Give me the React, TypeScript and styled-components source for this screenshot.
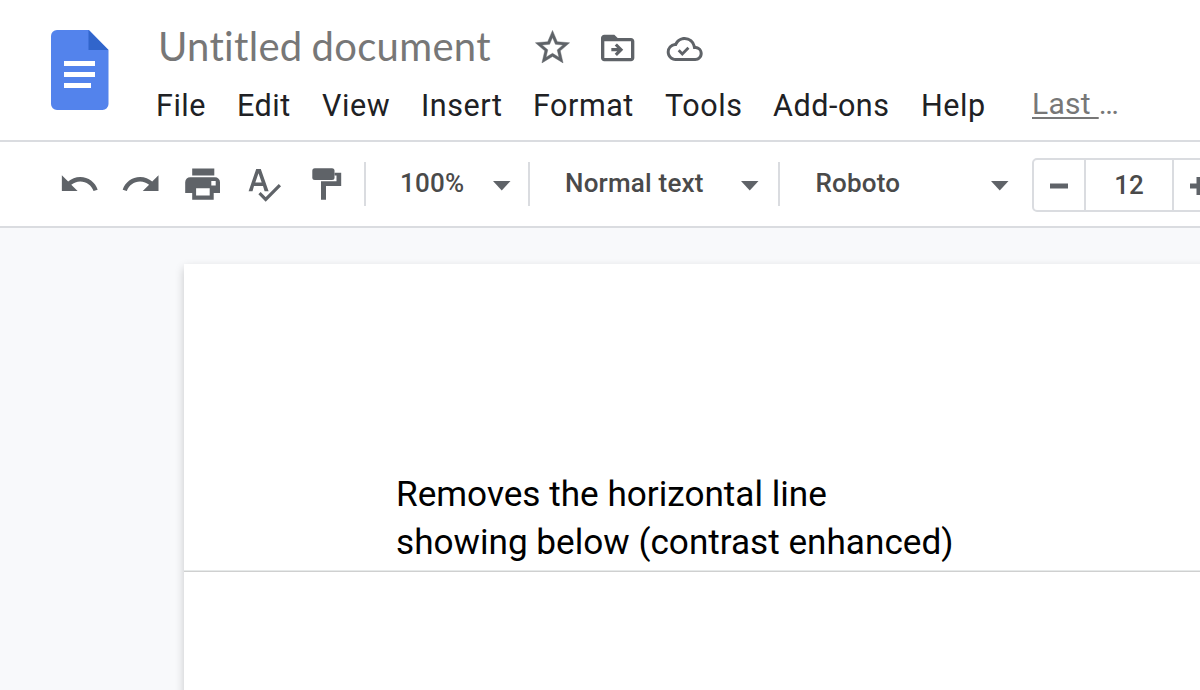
import React from "react";
import styled, { createGlobalStyle } from "styled-components";

const GlobalStyle = createGlobalStyle`
  * { box-sizing: border-box; }
  html, body { margin: 0; padding: 0; }
  body { width: 1200px; height: 690px; overflow: hidden; background: #f8f9fb; font-family: Roboto, sans-serif; }
`;

const Shell = styled.div`
  width: 1200px;
  height: 690px;
  overflow: hidden;
  display: flex;
  flex-direction: column;
`;

const Header = styled.header`
  height: 142px;
  flex: none;
  display: flex;
  background: #fff;
  border-bottom: 2px solid #dadce0;
`;

const Logo = styled.svg`
  width: 58px;
  height: 80px;
  margin: 30px 47px 0 51px;
  flex: none;
`;

const HeaderMain = styled.div`
  display: flex;
  flex-direction: column;
  padding-top: 22px;
`;

const TitleRow = styled.div`
  display: flex;
  height: 52px;
`;

const Title = styled.h1`
  margin: -1px 0 0 2px;
  width: 374px;
  font: 400 40px/50px Lato, sans-serif;
  letter-spacing: 0.3px;
  word-spacing: -1.5px;
  color: #777;
  white-space: nowrap;
`;

const TitleIcon = styled.svg<{ $size: number; $top: number; $gap: number }>`
  width: ${(p) => p.$size}px;
  height: ${(p) => p.$size}px;
  margin: ${(p) => p.$top}px ${(p) => p.$gap}px 0 0;
  fill: #5f6368;
  flex: none;
`;

const MenuBar = styled.nav`
  display: flex;
  height: 60px;
`;

const MenuItem = styled.span<{ $width: number }>`
  width: ${(p) => p.$width}px;
  flex: none;
  font-size: 30.5px;
  line-height: 63px;
  letter-spacing: 0.55px;
  color: #202124;
  white-space: nowrap;
`;

const LastEdit = styled.span`
  font-size: 30px;
  line-height: 60px;
  letter-spacing: 0.3px;
  color: #777;
  white-space: pre;
`;

const Underlined = styled.span`
  text-decoration: underline;
  text-decoration-thickness: 2px;
  text-underline-offset: 3px;
`;

const Toolbar = styled.div`
  height: 86px;
  flex: none;
  display: flex;
  align-items: flex-start;
  background: #fff;
  border-bottom: 2px solid #dadce0;
  padding-left: 58px;
`;

const Tools = styled.div`
  display: flex;
  flex: none;
  gap: 20px;
  width: 306px;
  padding-top: 21px;
`;

const ToolIcon = styled.svg`
  width: 42px;
  height: 42px;
  fill: #5f6368;
  flex: none;
`;

const Picker = styled.div<{ $width: number; $start: number; $end: number }>`
  width: ${(p) => p.$width}px;
  height: 44px;
  margin-top: 20px;
  padding: 0 ${(p) => p.$end}px 0 ${(p) => p.$start}px;
  flex: none;
  display: flex;
  justify-content: space-between;
  border-left: 2px solid #dadce0;
  font-weight: 500;
  font-size: 26px;
  line-height: 43px;
  letter-spacing: 0.2px;
  color: #4a4a4a;
  white-space: nowrap;
`;

const Caret = styled.svg`
  width: 18px;
  height: 10px;
  margin-top: 19px;
  fill: #5f6368;
`;

const Stepper = styled.div`
  display: flex;
  flex: none;
  width: 194px;
  height: 54px;
  margin-top: 16px;
  border: 2px solid #dadce0;
  border-radius: 5px;
`;

const StepperCell = styled.div<{ $width: number }>`
  width: ${(p) => p.$width}px;
  flex: none;
  display: flex;
  align-items: center;
  justify-content: center;
  font-weight: 500;
  font-size: 26px;
  color: #4a4a4a;
  & + & { border-left: 2px solid #dadce0; }
`;

const StepIcon = styled.svg`
  width: 18px;
  height: 18px;
  margin-top: 1px;
  fill: #5f6368;
`;

const Canvas = styled.main`
  flex: 1;
  min-height: 0;
  padding: 36px 0 0 184px;
  background: #f8f9fb;
`;

const Page = styled.article`
  width: 1100px;
  height: 500px;
  background: #fff;
  box-shadow: 0 4px 9px rgba(0, 0, 0, 0.2);
`;

const Body = styled.div`
  height: 308px;
  padding: 206px 0 0 212px;
  border-bottom: 1px solid #cfd0d0;
  box-shadow: inset 0 -1px 0 #e6e9e9;
`;

const Paragraph = styled.p`
  margin: 0;
  font-size: 35.15px;
  line-height: 48px;
  color: #000;
  white-space: nowrap;
`;

const menus: [string, number][] = [
  ["File", 81], ["Edit", 85], ["View", 99], ["Insert", 112], ["Format", 132],
  ["Tools", 108], ["Add-ons", 148], ["Help", 111],
];

const DropCaret = () => (
  <Caret viewBox="0 0 18 10"><path d="M0 0h17.500L8.750 9.500z" /></Caret>
);

export default function App() {
  return (
    <Shell>
      <GlobalStyle />
      <Header>
        <Logo viewBox="0 0 58 80">
          <path fill="#5383ec" d="M6 0H38L57.500 20V74a6 6 0 0 1-6 6H6a6 6 0 0 1-6-6V6a6 6 0 0 1 6-6z" />
          <path fill="#3165cb" d="M37.500 0v20h20z" />
          <path fill="#fff" d="M13 31h31v5H13zM13 42h31v5H13zM13 53h27v5H13z" />
        </Logo>
        <HeaderMain>
          <TitleRow>
            <Title>Untitled document</Title>
            <TitleIcon viewBox="0 0 24 24" $size={41} $top={5} $gap={25}>
              <path stroke="#5f6368" strokeWidth="0.25" d="M22 9.24l-7.19-.62L12 2 9.19 8.63 2 9.24l5.46 4.73L5.82 21 12 17.27 18.18 21l-1.63-7.03L22 9.24zM12 15.4l-3.76 2.27 1-4.28-3.32-2.88 4.38-.38L12 6.100l1.71 4.04 4.38.38-3.32 2.88 1 4.28L12 15.4z" />
            </TitleIcon>
            <TitleIcon viewBox="0.2 0 24 24" $size={40} $top={6.3} $gap={29}>
              <path d="M20 6h-8l-2-2H4c-1.100 0-2 .9-2 2v12c0 1.100.9 2 2 2h16c1.100 0 2-.9 2-2V8c0-1.100-.9-2-2-2zm0 12H4V8h16v10z" />
              <path fill="none" stroke="#5f6368" strokeWidth="1.9" d="M8.200 13H14M10.900 9.900L14 13l-3.100 3.100" />
            </TitleIcon>
            <TitleIcon viewBox="0.2 0 24 24" $size={36} $top={8.5} $gap={0} overflow="visible">
              <path d="M19.35 10.04A7.49 7.49 0 0 0 12 4C9.11 4 6.600 5.64 5.35 8.04A5.994 5.994 0 0 0 0 14c0 3.31 2.69 6 6 6h13c2.76 0 5-2.24 5-5 0-2.64-2.050-4.78-4.65-4.96zM19 18H6c-2.21 0-4-1.79-4-4 0-2.050 1.53-3.76 3.56-3.97l1.070-.11.5-.95A5.469 5.469 0 0 1 12 6c2.62 0 4.88 1.86 5.39 4.43l.3 1.500 1.53.11A2.98 2.98 0 0 1 22 15c0 1.65-1.35 3-3 3z" />
              <path fill="none" stroke="#5f6368" strokeWidth="1.9" d="M8 12.900l2.400 2.400 4.100-4.100" />
            </TitleIcon>
          </TitleRow>
          <MenuBar>
            {menus.map(([label, width]) => (
              <MenuItem key={label} $width={width}>{label}</MenuItem>
            ))}
            <LastEdit><Underlined>Last </Underlined>…</LastEdit>
          </MenuBar>
        </HeaderMain>
      </Header>
      <Toolbar>
        <Tools>
          <ToolIcon viewBox="-0.2 0 24 24"><path d="M12.500 8c-2.65 0-5.050.99-6.900 2.600L2 7v9h9l-3.62-3.62c1.39-1.16 3.16-1.88 5.12-1.88 3.54 0 6.55 2.31 7.600 5.500l2.37-.78C21.08 11.03 17.15 8 12.500 8z" /></ToolIcon>
          <ToolIcon viewBox="0 0 24 24"><path d="M18.4 10.6C16.55 8.99 14.15 8 11.5 8c-4.65 0-8.58 3.03-9.96 7.22L3.9 16c1.05-3.19 4.05-5.5 7.6-5.5 1.95 0 3.73.72 5.12 1.88L13 16h9V7l-3.6 3.6z" /></ToolIcon>
          <ToolIcon viewBox="0 0 42 42">
            <path fillRule="evenodd" d="M10.200 5.500h22.100v7H10.200zM8.500 14.200h24.500a5 5 0 0 1 5 5V30h-6.300v6.800H10.200V30H3.200V19.200a5 5 0 0 1 5.300-5zM14.100 25.200v7.300h13.600v-7.300zM29.300 18h4.400v4.400h-4.400z" />
          </ToolIcon>
          <ToolIcon viewBox="0 0 42 42">
            <path fillRule="evenodd" d="M12.200 6h4.600l7.800 22.300h-4L19 23h-9l-1.500 5.300H4.600zM14.500 10.200l-3.200 9.400h6.400z" />
            <path fill="none" stroke="#5f6368" strokeWidth="3.2" d="M15.500 30.200l6.200 6.200 14.200-14.200" />
          </ToolIcon>
          <ToolIcon viewBox="0 0 42 42">
            <rect x="6.300" y="5.300" width="22.200" height="11.700" rx="2.500" />
            <path d="M28.500 9.700h6.700V23H20v13.800h-5V18.300h15.500v-5.800h-2z" />
          </ToolIcon>
        </Tools>
        <Picker $width={164} $start={34} $end={17.5}>100%<DropCaret /></Picker>
        <Picker $width={250} $start={35} $end={19.5}>Normal text<DropCaret /></Picker>
        <Picker $width={254} $start={35.5} $end={23.5}>Roboto<DropCaret /></Picker>
        <Stepper>
          <StepperCell $width={50}><StepIcon viewBox="0 0 18 18"><path d="M0 6.500h18v5H0z" /></StepIcon></StepperCell>
          <StepperCell $width={88}>12</StepperCell>
          <StepperCell $width={52}><StepIcon viewBox="0 0 18 18"><path d="M0 6.500h6.500V0h5v6.500H18v5h-6.500V18h-5v-6.500H0z" /></StepIcon></StepperCell>
        </Stepper>
      </Toolbar>
      <Canvas>
        <Page>
          <Body>
            <Paragraph>Removes the horizontal line</Paragraph>
            <Paragraph>showing below (contrast enhanced)</Paragraph>
          </Body>
        </Page>
      </Canvas>
    </Shell>
  );
}
